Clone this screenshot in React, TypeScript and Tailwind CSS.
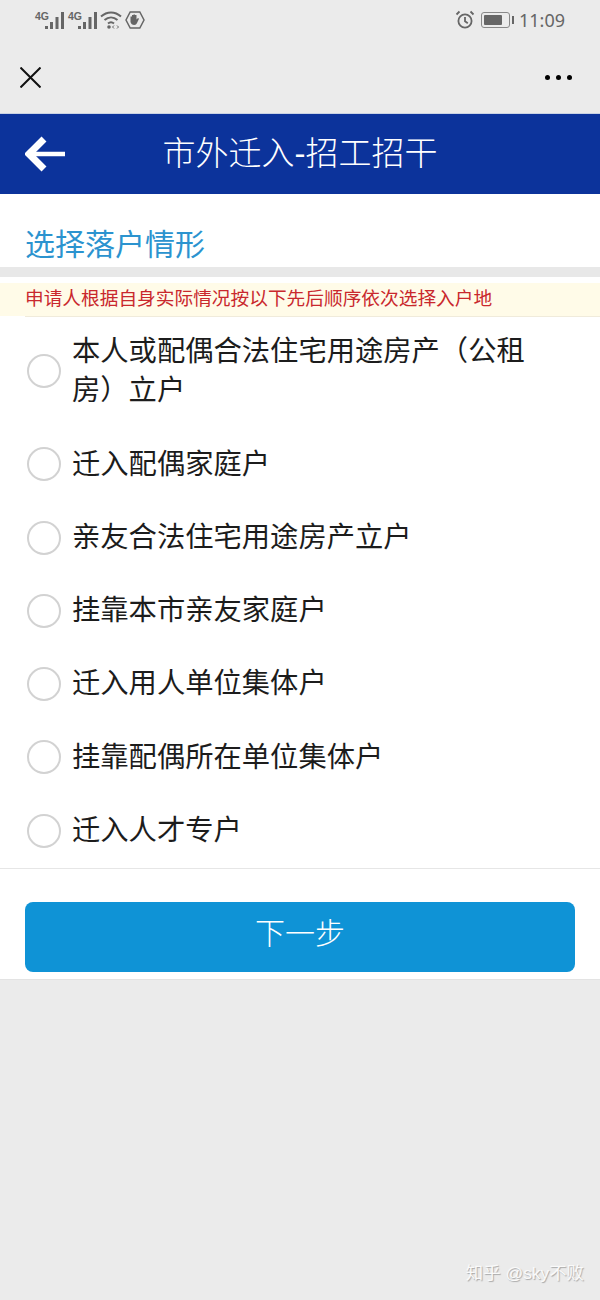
import React from 'react';

const options = [
  '本人或配偶合法住宅用途房产（公租房）立户',
  '迁入配偶家庭户',
  '亲友合法住宅用途房产立户',
  '挂靠本市亲友家庭户',
  '迁入用人单位集体户',
  '挂靠配偶所在单位集体户',
  '迁入人才专户',
];

function Signal() {
  return (
    <div className="relative w-[33px] h-[22px]">
      <span className="absolute left-0 top-[2px] text-[10.500px] leading-[10px] font-bold text-[#666]">4G</span>
      <svg className="absolute left-[9px] top-[2px]" width="24" height="20" viewBox="0 0 24 20" fill="#666">
        <rect x="1" y="15" width="3" height="3" />
        <rect x="6" y="11" width="3" height="7" />
        <rect x="11.500" y="6" width="3" height="12" />
        <rect x="17" y="1" width="3" height="17" />
      </svg>
    </div>
  );
}

function StatusBar() {
  return (
    <div className="h-[40px] flex items-center justify-between pl-[35px] pr-[35px]">
      <div className="flex items-center gap-0">
        <Signal />
        <Signal />
        <svg width="22" height="20" viewBox="0 0 22 20" fill="none" stroke="#666" strokeWidth="2" className="-ml-[1px]">
          <path d="M1 6.500C7 1 15 1 21 6.500" />
          <path d="M4.500 10C8.500 6.500 13.500 6.500 17.500 10" />
          <path d="M8 13.500C9.800 12 12.200 12 14 13.500" />
          <circle cx="9" cy="17" r="1.800" fill="#666" stroke="none" />
          <path d="M14 15.500l-1.500 1.500 1.500 1.500M17 15.500l1.500 1.500-1.500 1.500" strokeWidth="1" />
        </svg>
        <svg width="20" height="20" viewBox="0 0 20 20" fill="none" className="ml-[3px]">
          <path d="M5.200 2h9.600L19 10l-4.200 8H5.200L1 10z" stroke="#666" strokeWidth="1.500" />
          <path d="M5.500 6.500h1.500v2.500V5h1.500v3.500V4.500H10V8V5h1.500v4.500l1.500-1.500 1 .8-2 4.200c-.5 1.300-1.300 2-2.800 2-1.900 0-3.200-1-3.700-3z" fill="#666" />
        </svg>
      </div>
      <div className="flex items-center">
        <svg width="20" height="20" viewBox="0 0 20 20" fill="none" stroke="#666" strokeWidth="1.800" className="mr-[6px] ml-[1px]">
          <circle cx="10" cy="11" r="6.600" />
          <path d="M10 7v4.300l2.800 2" />
          <path d="M1.500 4.500L4.500 1.500M18.500 4.500L15.500 1.500" />
        </svg>
        <div className="w-[29px] h-[16px] border border-[#888] rounded-[3px] p-[2px]">
          <div className="w-[18px] h-full bg-[#666] rounded-[1px]" />
        </div>
        <div className="w-[2px] h-[8px] bg-[#666] ml-[2px] mr-[5px]" />
        <span className="text-[18px] leading-none text-[#666] font-['Noto_Sans',sans-serif]">11:09</span>
      </div>
    </div>
  );
}

function WechatBar() {
  return (
    <div className="h-[73px] flex items-center justify-between pl-[20px] pr-[28px]">
      <svg width="21" height="21" viewBox="0 0 21 21" stroke="#111" strokeWidth="2" className="-mb-[2px]">
        <path d="M0.500 0.500L20.500 20.500M20.500 0.500L0.500 20.500" />
      </svg>
      <div className="flex gap-[6px] mt-[2px]">
        <span className="w-[5px] h-[5px] rounded-full bg-black" />
        <span className="w-[5px] h-[5px] rounded-full bg-black" />
        <span className="w-[5px] h-[5px] rounded-full bg-black" />
      </div>
    </div>
  );
}

function Radio({ label }: { label: string }) {
  return (
    <li className="flex items-center pl-[27px] pr-[58px] py-[17px]">
      <span className="w-[34px] h-[34px] shrink-0 rounded-full border-2 border-[#d2d2d2] bg-white" />
      <span className="ml-[11px] text-[28.300px] leading-[39.300px] text-[#1c1c1c]">{label}</span>
    </li>
  );
}

export default function App() {
  return (
    <div className="w-[600px] h-[1300px] bg-[#ebebeb] font-['Liberation_Sans','Noto_Sans_CJK_SC',sans-serif] overflow-hidden relative">
      <StatusBar />
      <WechatBar />

      {/* Header */}
      <header className="h-[81px] pb-[1px] bg-[#0c339b] flex items-center justify-center relative border-t border-[#c9d2e4]">
        <svg className="absolute left-[25px] top-[22px]" width="41" height="36" viewBox="0 0 41 36" fill="none" stroke="#fff">
          <path d="M19 3L4 18l15 15" strokeWidth="7" />
          <path d="M8 18H40" strokeWidth="4.500" />
        </svg>
        <h1 className="text-[33px] leading-none font-light text-white">市外迁入-招工招干</h1>
      </header>

      <div className="bg-white">
        <h2 className="h-[73px] pl-[25px] pt-[32px] text-[30px] leading-[38px] text-[#2b93cf]">选择落户情形</h2>
        <div className="h-[10px] bg-[#e8e8e8]" />
        <div className="h-[33px] mt-[6px] bg-[#fffbe8] flex items-center pl-[25px]">
          <p className="text-[18.700px] leading-none text-[#c9282d]">申请人根据自身实际情况按以下先后顺序依次选择入户地</p>
        </div>
        <div className="ml-[25px] h-[1px] bg-[#f0ebdb]" />

        <ul className="-mt-[2px] mb-[0.600px]">
          {options.map((o) => (
            <Radio key={o} label={o} />
          ))}
        </ul>

        <div className="border-t border-[#e6e6e6] px-[25px] pt-[33px] pb-[7px]">
          <button className="w-full h-[70px] pb-[6px] rounded-[8px] bg-[#0f93d6] text-[30px] font-light text-white">下一步</button>
        </div>
      </div>
      <div className="h-[1px] bg-[#e3e3e3]" />

      {/* watermark */}
      <span className="absolute right-[16px] top-[1263px] text-[17.400px] leading-[20px] text-[#fafafa] [text-shadow:1px_1px_1px_#a8a8a8]">知乎 @sky不败</span>
    </div>
  );
}
